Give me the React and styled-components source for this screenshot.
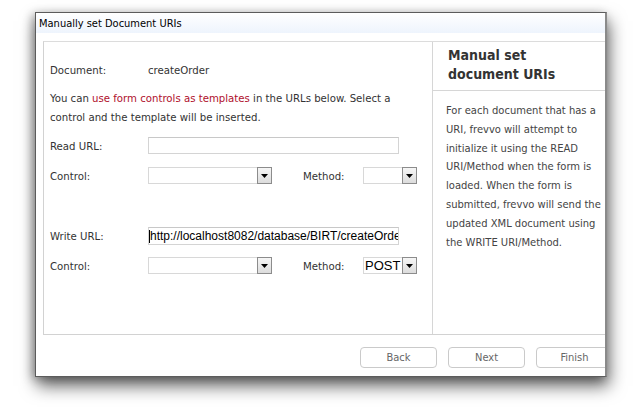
import React from "react";
import styled, { createGlobalStyle } from "styled-components";

const Global = createGlobalStyle`
  html, body { margin: 0; padding: 0; background: #fff; }
  body { font-family: "DejaVu Sans Condensed", "DejaVu Sans", sans-serif; }
`;

const Page = styled.div`
  padding: 12px 0 0 35px;
  height: 407px;
  box-sizing: border-box;
`;

const Window = styled.div`
  width: 572px;
  height: 365px;
  box-sizing: border-box;
  border: 1px solid #5c5c5c;
  border-right: 2px solid #8a8a8a;
  background: #fff;
  display: flex;
  flex-direction: column;
  overflow: hidden;
  box-shadow: 2px 9px 16px rgba(0, 0, 0, 0.6), -3px 2px 9px rgba(0, 0, 0, 0.28);
`;

const TitleBar = styled.div`
  height: 20px;
  flex: none;
  background: linear-gradient(#ffffff, #eef4fd);
  display: flex;
  align-items: center;
  padding-left: 3px;
  font-size: 11px;
  color: #000;
`;

const Body = styled.div`
  flex: none;
  padding: 8px 0 0 7px;
`;

const Panel = styled.div`
  height: 294px;
  box-sizing: border-box;
  border: 1px solid #d2d2d2;
  border-top: 1px solid #dcdcdc;
  border-right: none;
  display: grid;
  grid-template-columns: 389px 1fr;
`;

const LeftCol = styled.div`
  border-right: 1px solid #d6d6d6;
  padding: 19px 0 0 6px;
  display: flex;
  flex-direction: column;
  font-size: 11.3px;
  color: #333;
`;

const Row = styled.div`
  display: flex;
  align-items: center;
  height: ${(p) => p.$h || 17}px;
  margin-top: ${(p) => p.$mt || 0}px;
`;

const Label = styled.div`
  width: ${(p) => p.$w || 98}px;
  flex: none;
  white-space: nowrap;
  padding-top: 1px;
  margin-left: ${(p) => p.$ml || 0}px;
`;

const Value = styled.div`
  color: #333;
`;

const Para = styled.div`
  margin-top: 10px;
  line-height: 19px;
  white-space: nowrap;
`;

const Red = styled.span`
  color: #b0102c;
`;

const TextBox = styled.div`
  width: ${(p) => p.$w}px;
  height: 100%;
  box-sizing: border-box;
  border: 1px solid #d4d4d4;
  border-top-color: #c8c8c8;
  background: #fff;
  display: flex;
  align-items: center;
  overflow: hidden;
  white-space: nowrap;
  font-family: "Liberation Sans", Arial, sans-serif;
  font-size: 12px;
  color: #000;
`;

const Caret = styled.span`
  width: 1px;
  height: 13px;
  background: #000;
  flex: none;
`;

const Select = styled.div`
  width: ${(p) => p.$w}px;
  height: 100%;
  box-sizing: border-box;
  display: flex;
  flex: none;
`;

const SelectField = styled.div`
  flex: 1;
  box-sizing: border-box;
  border: 1px solid #d8d8d8;
  border-right: none;
  background: #fff;
  display: flex;
  align-items: center;
  padding-left: 1px;
  font-family: "Liberation Sans", Arial, sans-serif;
  font-size: 13px;
  color: #000;
  overflow: hidden;
`;

const ArrowBtn = styled.div`
  width: 15px;
  flex: none;
  box-sizing: border-box;
  border: 1px solid #8c8c8c;
  background: linear-gradient(#f6f6f6, #dcdcdc);
  display: flex;
  align-items: center;
  justify-content: center;
`;

const RightCol = styled.div`
  display: flex;
  flex-direction: column;
`;

const HelpHeader = styled.div`
  height: 44px;
  border-bottom: 1px solid #d6d6d6;
  padding: 4px 0 0 15px;
  box-sizing: content-box;
  font-weight: bold;
  font-size: 14px;
  line-height: 19px;
  color: #333;
`;

const HelpText = styled.div`
  padding: 11px 0 0 13px;
  font-size: 11.1px;
  line-height: 18.8px;
  color: #444;
  white-space: nowrap;
`;

const Footer = styled.div`
  flex: 1;
  display: flex;
  justify-content: flex-end;
  align-items: flex-start;
  padding-top: 12px;
  gap: 11px;
  margin-right: -8px;
`;

const Button = styled.div`
  width: 77px;
  height: 21px;
  flex: none;
  box-sizing: border-box;
  border: 1px solid #cacaca;
  border-radius: 4px;
  background: #fff;
  display: flex;
  align-items: center;
  justify-content: center;
  font-size: 11px;
  color: #666;
`;

const Arrow = () => (
  <svg width="7" height="4" viewBox="0 0 7 4">
    <polygon points="0,0 7,0 3.5,4" fill="#000" />
  </svg>
);

const Dropdown = ({ w, value }) => (
  <Select $w={w}>
    <SelectField>{value}</SelectField>
    <ArrowBtn>
      <Arrow />
    </ArrowBtn>
  </Select>
);

export default function App() {
  return (
    <Page>
      <Global />
      <Window>
        <TitleBar>Manually set Document URIs</TitleBar>
        <Body>
          <Panel>
            <LeftCol>
              <Row $h={18}>
                <Label>Document:</Label>
                <Value>createOrder</Value>
              </Row>
              <Para>
                You can <Red>use form controls as templates</Red> in the URLs below. Select a
                <br />
                control and the template will be inserted.
              </Para>
              <Row $mt={10}>
                <Label>Read URL:</Label>
                <TextBox $w={251} />
              </Row>
              <Row $mt={13}>
                <Label>Control:</Label>
                <Dropdown w={124} />
                <Label $w={60} $ml={31}>Method:</Label>
                <Dropdown w={54} />
              </Row>
              <Row $mt={43} $h={18}>
                <Label>Write URL:</Label>
                <TextBox $w={251}>
                  <Caret />
                  http://localhost8082/database/BIRT/createOrder
                </TextBox>
              </Row>
              <Row $mt={12}>
                <Label>Control:</Label>
                <Dropdown w={124} />
                <Label $w={60} $ml={31}>Method:</Label>
                <Dropdown w={54} value="POST" />
              </Row>
            </LeftCol>
            <RightCol>
              <HelpHeader>
                Manual set
                <br />
                document URIs
              </HelpHeader>
              <HelpText>
                For each document that has a<br />
                URI, frevvo will attempt to<br />
                initialize it using the READ<br />
                URI/Method when the form is<br />
                loaded. When the form is<br />
                submitted, frevvo will send the<br />
                updated XML document using<br />
                the WRITE URI/Method.
              </HelpText>
            </RightCol>
          </Panel>
        </Body>
        <Footer>
          <Button>Back</Button>
          <Button>Next</Button>
          <Button>Finish</Button>
        </Footer>
      </Window>
    </Page>
  );
}
